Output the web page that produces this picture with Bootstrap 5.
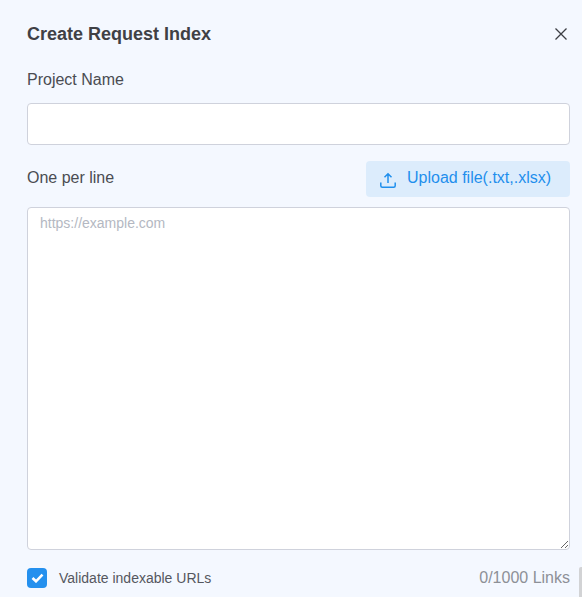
<!DOCTYPE html>
<html lang="en">
<head>
<meta charset="utf-8">
<title>Create Request Index</title>
<link href="https://cdn.jsdelivr.net/npm/bootstrap@5.3.0/dist/css/bootstrap.min.css" rel="stylesheet">
<style>
html, body { height: 597px; overflow: hidden; }
body { background: #f4f8ff; font-family: "Liberation Sans", Arial, sans-serif; color: #3c3e44; }
.dlg { padding: 24px 12px 0 27px; }
.dlg-head { height: 20px; margin-bottom: 26px; }
.dlg-title { font-size: 18px; font-weight: 700; line-height: 20px; margin: 0; color: #3f4045; }
.dlg-close { width: 12px; height: 12px; margin-right: 3px; padding: 0; border: 0; background: none; line-height: 0; color: #3c3e44; }
.fld-label { font-size: 16px; line-height: 20px; margin-bottom: 14px; color: #4a4c52; }
.fld-name.form-control { height: 42px; margin-top: -1px; border: 1px solid #cfd2dc; border-radius: 4px; background: #fff; box-shadow: none; }
.row-upload { margin-top: 16px; margin-bottom: 10px; height: 36px; }
.row-upload .fld-label { margin: 0 0 2px; }
.btn-upload.btn { width: 204px; height: 36px; padding: 0 0 0 14px; gap: 11px; border: 0; border-radius: 4px; background: #dcecfc; color: #1f8fed; font-size: 16px; line-height: 20px; }
.btn-upload span { margin-bottom: 2px; }
.btn-upload svg { margin-top: 1px; }
.fld-urls.form-control { display: block; height: 343px; padding: 5px 12px; border: 1px solid #cfd2dc; border-radius: 4px; background: #fff; font-size: 14px; line-height: 20px; box-shadow: none; }
.fld-urls.form-control::placeholder { color: #b4b8c2; opacity: 1; }
.row-foot { margin-top: 18px; height: 20px; }
.chk { width: 20px; height: 20px; border-radius: 4px; background: #2490ee; }
.chk-label { font-size: 14px; line-height: 20px; margin-left: 12px; color: #55575e; }
.link-count { font-size: 16px; line-height: 20px; color: #8d9097; }
.edge-sliver { position: absolute; right: 0; top: 567px; width: 3px; height: 30px; background: #d2d3d5; border-radius: 2px 0 0 0; }
</style>
</head>
<body>
<div class="dlg">
  <div class="dlg-head d-flex justify-content-between align-items-center">
    <h1 class="dlg-title">Create Request Index</h1>
    <button type="button" class="dlg-close" aria-label="Close">
      <svg width="12" height="12" viewBox="0 0 12 12" fill="none" stroke="currentColor" stroke-width="1.3"><path d="M.5.5l11 11M11.500.5l-11 11"/></svg>
    </button>
  </div>
  <div class="fld-label">Project Name</div>
  <input type="text" class="form-control fld-name" aria-label="Project Name">
  <div class="row-upload d-flex justify-content-between align-items-center">
    <div class="fld-label">One per line</div>
    <button type="button" class="btn btn-upload d-flex align-items-center">
      <svg width="16" height="16" viewBox="0 0 16 16" fill="none" stroke="currentColor" stroke-width="1.5"><path d="M8 11V2M4.500 5.200L8 1.800l3.500 3.400M.8 10.500v3.200c0 .9.6 1.500 1.500 1.500h11.400c.9 0 1.500-.6 1.500-1.500v-3.200"/></svg>
      <span>Upload file(.txt,.xlsx)</span>
    </button>
  </div>
  <textarea class="form-control fld-urls" placeholder="https://example.com" aria-label="One per line"></textarea>
  <div class="row-foot d-flex justify-content-between align-items-center">
    <div class="d-flex align-items-center">
      <span class="chk d-flex align-items-center justify-content-center">
        <svg width="13" height="10" viewBox="0 0 13 10" fill="none" stroke="#fff" stroke-width="2.600"><path d="M1.500 5l3.500 3.300L11.500 1.700"/></svg>
      </span>
      <span class="chk-label">Validate indexable URLs</span>
    </div>
    <div class="link-count">0/1000 Links</div>
  </div>
</div>
<div class="edge-sliver"></div>
<script src="https://cdn.jsdelivr.net/npm/bootstrap@5.3.0/dist/js/bootstrap.bundle.min.js"></script>
</body>
</html>
